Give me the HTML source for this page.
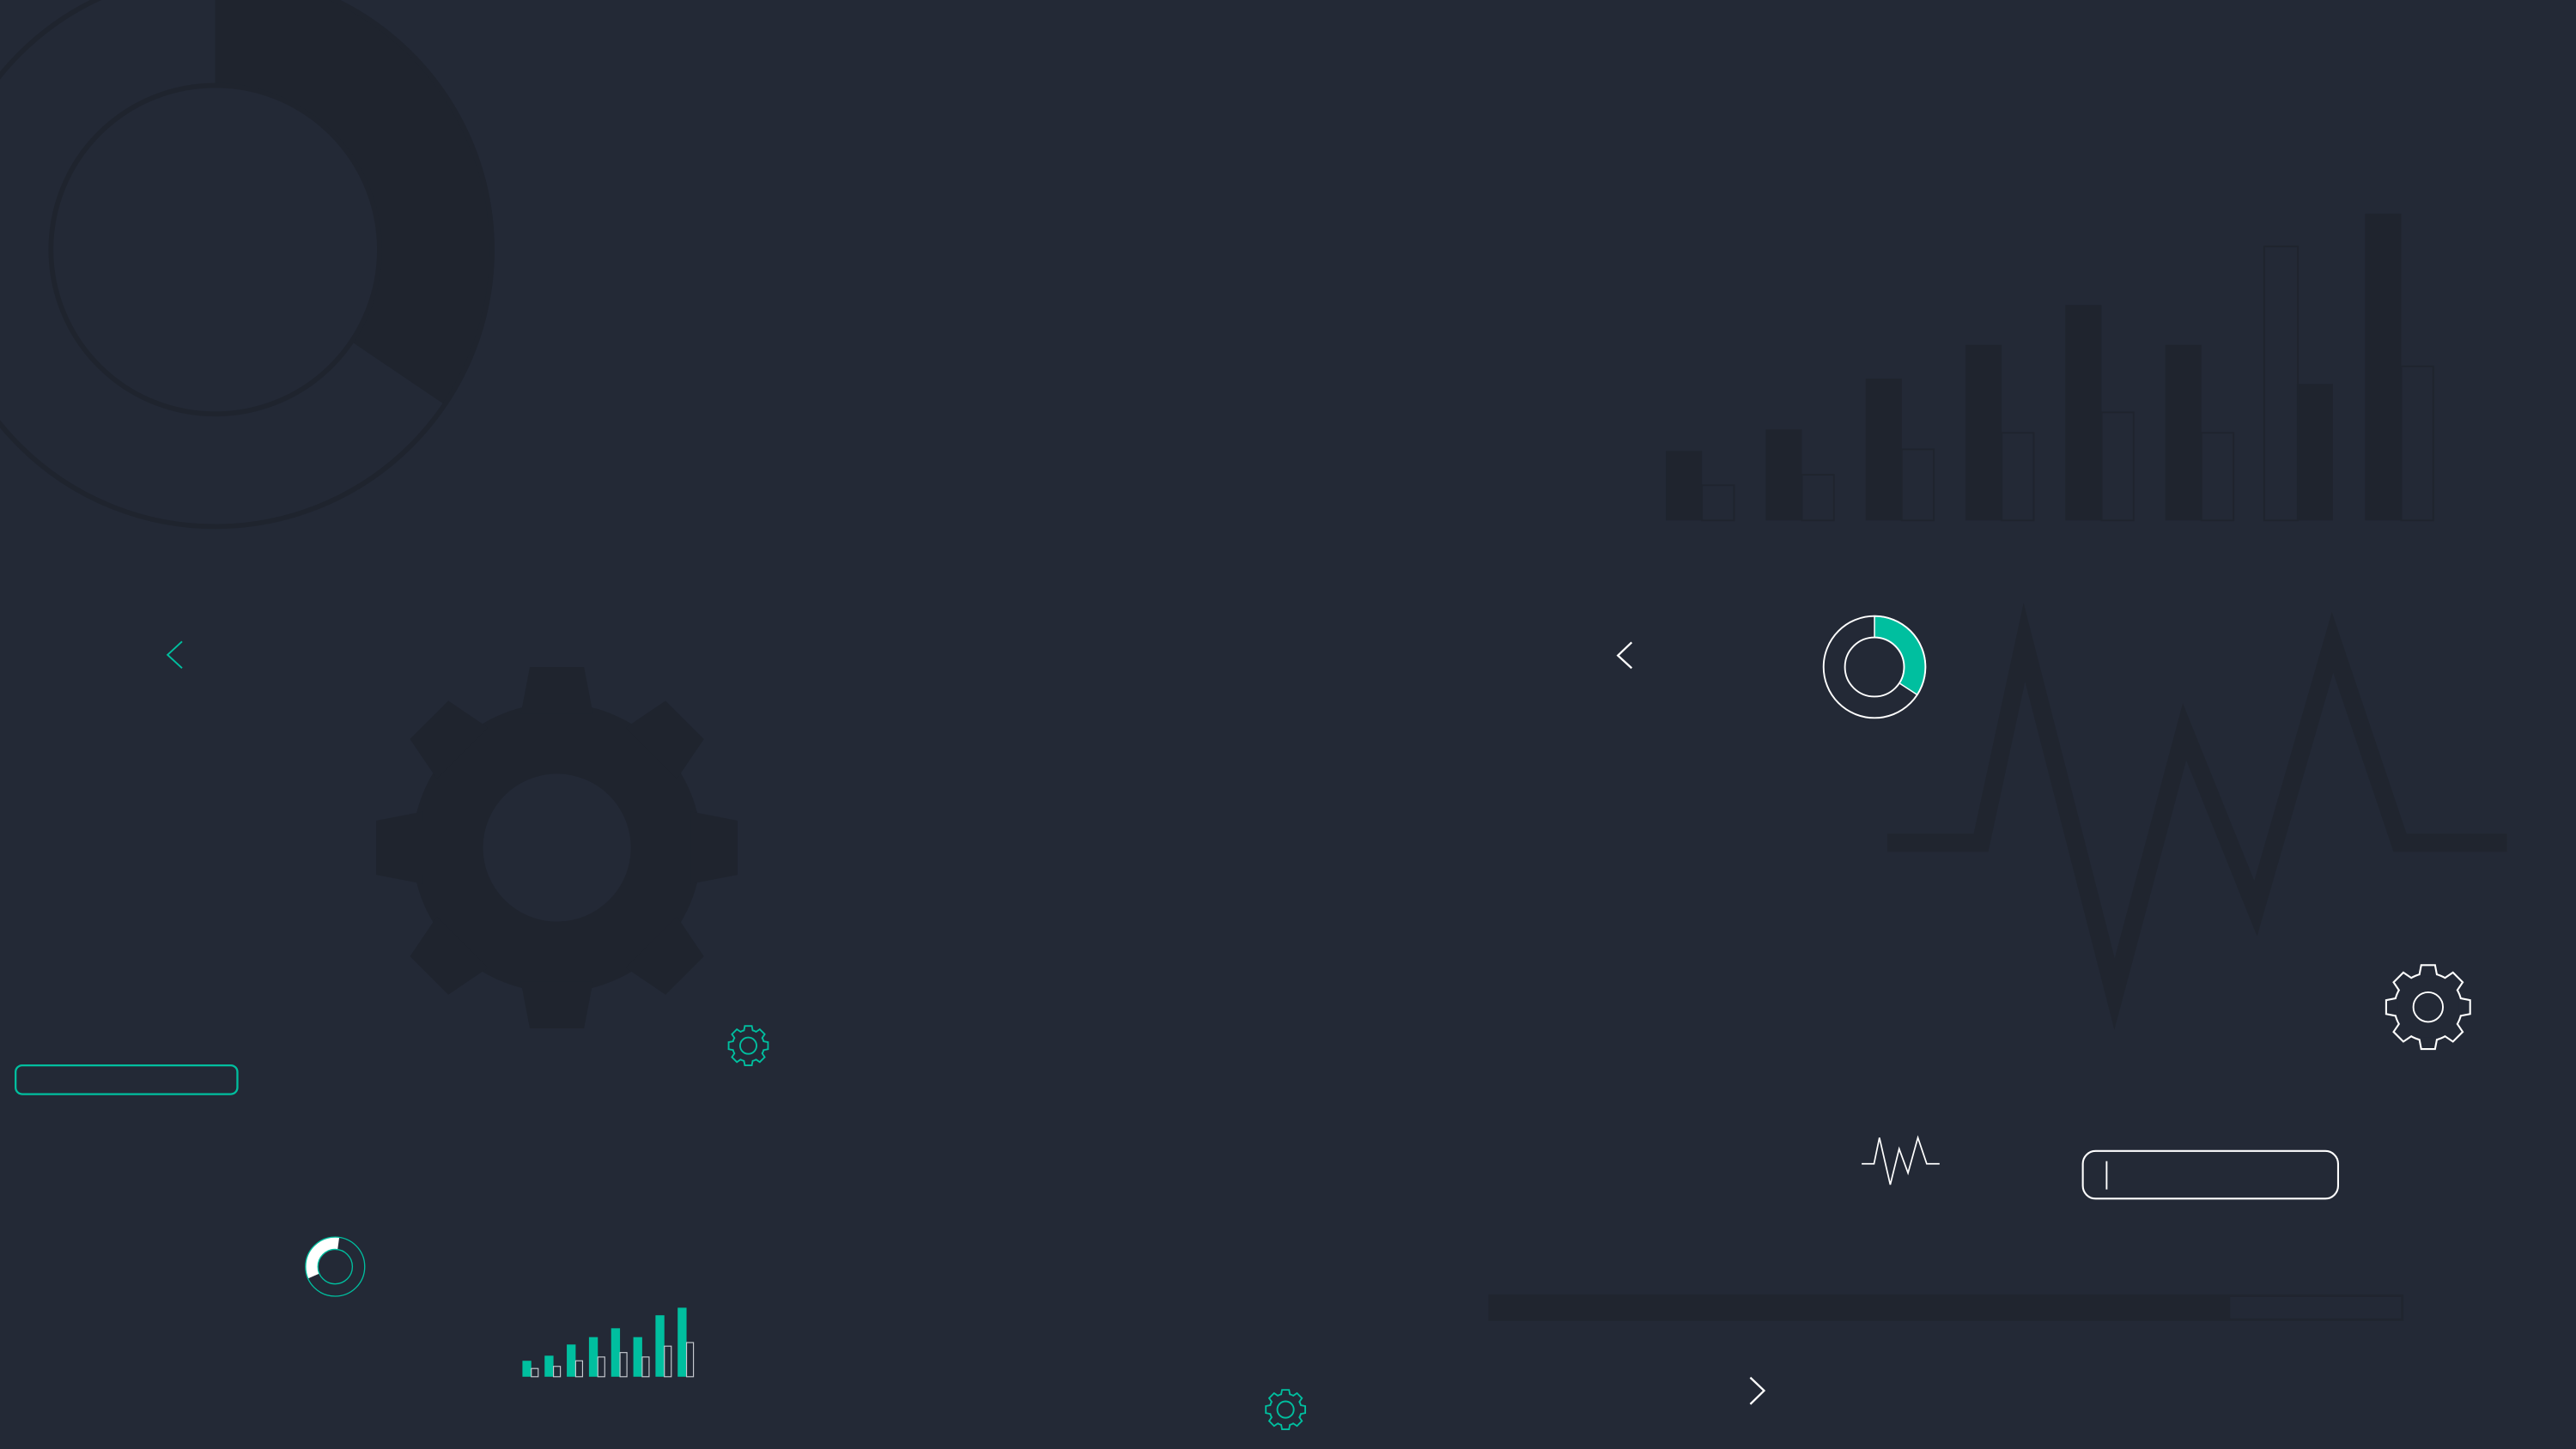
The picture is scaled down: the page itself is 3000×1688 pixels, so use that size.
<!DOCTYPE html>
<html><head><meta charset="utf-8"><style>
html,body{margin:0;padding:0;background:#232936;overflow:hidden}
svg{display:block}
</style></head><body>
<svg width="3000" height="1688" viewBox="0 0 1568 882" preserveAspectRatio="none" xmlns="http://www.w3.org/2000/svg">
<defs>
<g id="gear">
<circle r="0.8"/>
<polygon points="0.74,-0.2 1,-0.15 1,0.15 0.74,0.2"/>
<polygon points="0.74,-0.2 1,-0.15 1,0.15 0.74,0.2" transform="rotate(45)"/>
<polygon points="0.74,-0.2 1,-0.15 1,0.15 0.74,0.2" transform="rotate(90)"/>
<polygon points="0.74,-0.2 1,-0.15 1,0.15 0.74,0.2" transform="rotate(135)"/>
<polygon points="0.74,-0.2 1,-0.15 1,0.15 0.74,0.2" transform="rotate(180)"/>
<polygon points="0.74,-0.2 1,-0.15 1,0.15 0.74,0.2" transform="rotate(225)"/>
<polygon points="0.74,-0.2 1,-0.15 1,0.15 0.74,0.2" transform="rotate(270)"/>
<polygon points="0.74,-0.2 1,-0.15 1,0.15 0.74,0.2" transform="rotate(315)"/>
</g>
</defs>
<rect width="1568" height="882" fill="#232936"/>

<!-- big donut -->
<path d="M131,-18 A170,170 0 0 1 271.9,247.1 L213.9,207.9 A100,100 0 0 0 131,52 Z" fill="#1f242e"/>
<circle cx="131" cy="152" r="168.5" fill="none" stroke="#1f242e" stroke-width="3"/>
<circle cx="131" cy="152" r="100" fill="none" stroke="#1f242e" stroke-width="3"/>

<!-- dark bar chart -->
<g fill="#1f242e">
<rect x="1014" y="274.5" width="22" height="42.3"/>
<rect x="1074.8" y="261.4" width="22" height="55.4"/>
<rect x="1135.6" y="230.5" width="22" height="86.3"/>
<rect x="1196.4" y="210" width="22" height="106.8"/>
<rect x="1257.2" y="185.6" width="22" height="131.2"/>
<rect x="1318" y="210" width="22" height="106.8"/>
<rect x="1398" y="233.7" width="22" height="83.1"/>
<rect x="1439.6" y="130" width="22" height="186.8"/>
</g>
<g fill="none" stroke="#1f242e" stroke-width="1">
<rect x="1036" y="295.4" width="19.5" height="21.4"/>
<rect x="1096.8" y="289" width="19.5" height="27.8"/>
<rect x="1157.6" y="273.5" width="19.5" height="43.3"/>
<rect x="1218.4" y="263.5" width="19.5" height="53.3"/>
<rect x="1279.2" y="251" width="19.5" height="65.8"/>
<rect x="1340" y="263.5" width="19.5" height="53.3"/>
<rect x="1378.2" y="150" width="20.5" height="166.8"/>
<rect x="1461.6" y="223" width="19.5" height="93.8"/>
</g>

<!-- dark pulse -->
<polyline points="1148.8,513 1205.8,513 1232.2,391 1287.1,605 1329.7,445.4 1373,553 1419.8,391 1460.9,513 1525.9,513" fill="none" stroke="#20252f" stroke-width="11" stroke-linejoin="miter" stroke-miterlimit="10"/>

<!-- big dark gear -->
<g transform="translate(339,516) scale(110)" fill="#1f242e"><use href="#gear"/></g>
<circle cx="339" cy="516" r="45" fill="#232936"/>

<!-- chevrons -->
<polyline points="110.8,390.5 102,398.6 110.8,406.7" fill="none" stroke="#00bf9f" stroke-width="1"/>
<polyline points="993.2,391 984.8,399 993.2,406.7" fill="none" stroke="#ffffff" stroke-width="1.2"/>
<polyline points="1065.4,838.5 1073.8,846.5 1065.4,854.7" fill="none" stroke="#ffffff" stroke-width="1.2"/>

<!-- teal input -->
<rect x="9.5" y="648.5" width="135" height="17.5" rx="4" fill="none" stroke="#00bf9f" stroke-width="1.2"/>

<!-- teal gears -->
<g transform="translate(455.5,636.5) scale(11.5)">
<use href="#gear" fill="none" stroke="#00bf9f" stroke-width="0.17"/>
<use href="#gear" fill="#232936"/>
</g>
<circle cx="455.5" cy="636.5" r="5" fill="none" stroke="#00bf9f" stroke-width="1"/>
<g transform="translate(782.5,858) scale(11.5)">
<use href="#gear" fill="none" stroke="#00bf9f" stroke-width="0.17"/>
<use href="#gear" fill="#232936"/>
</g>
<circle cx="782.5" cy="858" r="5" fill="none" stroke="#00bf9f" stroke-width="1"/>

<!-- white gear -->
<g transform="translate(1478,613) scale(25)">
<use href="#gear" fill="none" stroke="#ffffff" stroke-width="0.088"/>
<use href="#gear" fill="#232936"/>
</g>
<circle cx="1478" cy="613" r="9" fill="none" stroke="#ffffff" stroke-width="1"/>

<!-- small donut -->
<path d="M206.5,753.2 A18,18 0 0 0 187.5,778.2 L194.4,775.2 A10.5,10.5 0 0 1 205.5,760.6 Z" fill="#ffffff"/>
<circle cx="204" cy="771" r="18" fill="none" stroke="#00bf9f" stroke-width="0.7"/>
<circle cx="204" cy="771" r="10.5" fill="none" stroke="#00bf9f" stroke-width="0.7"/>

<!-- teal bar chart -->
<g fill="#00bf9f">
<rect x="318" y="828.3" width="5.4" height="9.7"/>
<rect x="331.5" y="825.2" width="5.4" height="12.8"/>
<rect x="345" y="818.4" width="5.4" height="19.6"/>
<rect x="358.5" y="813.9" width="5.4" height="24.1"/>
<rect x="372" y="808.5" width="5.4" height="29.5"/>
<rect x="385.5" y="813.9" width="5.4" height="24.1"/>
<rect x="399" y="800.6" width="5.4" height="37.4"/>
<rect x="412.5" y="796" width="5.4" height="42"/>
</g>
<g fill="none" stroke="#c8ccd2" stroke-width="0.6">
<rect x="323.4" y="833" width="4.2" height="5"/>
<rect x="336.9" y="831.7" width="4.2" height="6.3"/>
<rect x="350.4" y="828.3" width="4.2" height="9.7"/>
<rect x="363.9" y="826" width="4.2" height="12"/>
<rect x="377.4" y="823.3" width="4.2" height="14.7"/>
<rect x="390.9" y="826" width="4.2" height="12"/>
<rect x="404.4" y="819.4" width="4.2" height="18.6"/>
<rect x="417.9" y="817.2" width="4.2" height="20.8"/>
</g>

<!-- right donut -->
<path d="M1141,375 A31,31 0 0 1 1167,422.9 L1156.1,415.8 A18,18 0 0 0 1141,388 Z" fill="#00bf9f" stroke="#ffffff" stroke-width="0.8"/>
<circle cx="1141" cy="406" r="31" fill="none" stroke="#ffffff" stroke-width="1"/>
<circle cx="1141" cy="406" r="18" fill="none" stroke="#ffffff" stroke-width="1"/>

<!-- white pulse -->
<polyline points="1133.2,708.4 1140.7,708.4 1144,692.5 1150.6,721.1 1156,699.3 1161.4,714 1167.4,692.5 1172.8,708.4 1180.6,708.4" fill="none" stroke="#ffffff" stroke-width="0.9"/>

<!-- white input -->
<rect x="1267.8" y="700.6" width="155.4" height="29" rx="7.8" fill="none" stroke="#ffffff" stroke-width="1.1"/>
<line x1="1282.3" y1="706.8" x2="1282.3" y2="724" stroke="#ffffff" stroke-width="1"/>

<!-- progress bar -->
<rect x="906" y="788" width="557" height="16" fill="#20252f"/>
<rect x="1357.5" y="789.5" width="104" height="13" fill="#232936"/>
</svg>
</body></html>
